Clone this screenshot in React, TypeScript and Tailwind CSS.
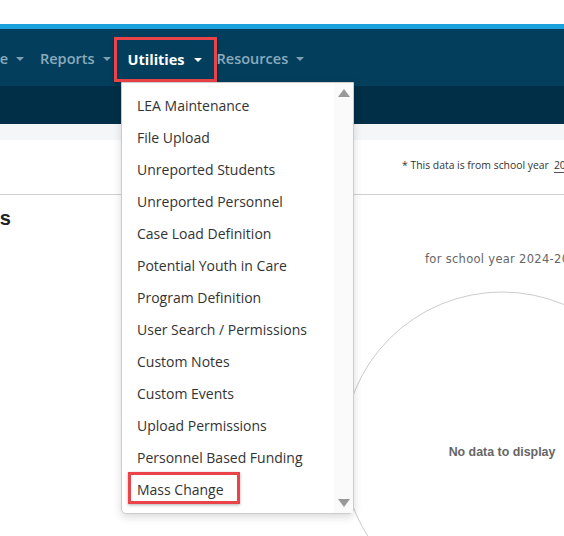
import React from "react";

const items = [
  "LEA Maintenance",
  "File Upload",
  "Unreported Students",
  "Unreported Personnel",
  "Case Load Definition",
  "Potential Youth in Care",
  "Program Definition",
  "User Search / Permissions",
  "Custom Notes",
  "Custom Events",
  "Upload Permissions",
  "Personnel Based Funding",
  "Mass Change",
];

function Caret({ white }: { white?: boolean }) {
  return (
    <span
      className={
        white
          ? "block w-0 h-0 border-x-[4px] border-x-transparent border-t-[4px] border-t-white"
          : "block w-0 h-0 border-x-[4px] border-x-transparent border-t-[4px] border-t-[#7f9fb1]"
      }
    />
  );
}

export default function App() {
  return (
    <div
      className="relative w-[564px] h-[536px] overflow-hidden bg-white"
      style={{ fontFamily: '"Open Sans", sans-serif' }}
    >
      <div className="h-[24px] bg-white" />
      <div className="h-[5px] bg-[#1ba1db]" />
      <nav className="h-[57px] pt-[2px] bg-[#033f5c] flex items-center text-[14.5px] font-semibold text-[#8aabbd] whitespace-nowrap">
        <div className="w-[8px] overflow-hidden flex justify-end">
          <span>Compliance</span>
        </div>
        <span className="ml-[8px] flex items-center"><Caret /></span>
        <span className="ml-[16px]">Reports</span>
        <span className="ml-[8px] flex items-center"><Caret /></span>
        <div className="ml-[3px] self-start mt-[6px] h-[45px] border-[3px] border-[#ea4349] flex items-center pl-[11px] pr-[12px] text-white font-bold shadow-[0_2px_4px_rgba(0,0,0,0.35)]">
          <span>Utilities</span>
          <span className="ml-[9px] flex items-center"><Caret white /></span>
        </div>
        <span className="ml-[0px]">Resources</span>
        <span className="ml-[8px] flex items-center"><Caret /></span>
      </nav>
      <div className="h-[38px] bg-[#002f47]" />
      <div className="h-[16px] bg-[#f5f6f8]" />
      <div className="h-[55px] flex items-center pl-[402px] pb-[3px] text-[10.4px] text-[#333] whitespace-nowrap border-b border-[#cfcfcf]">
        <span>* This data is from school year</span>
        <span className="ml-[5px] border-b border-[#555] leading-[14px]">2024-2025</span>
      </div>
      <div className="flex">
        <div className="w-[340px] shrink-0 pt-[11px]">
          <div
            className="w-[11px] overflow-hidden flex justify-end whitespace-nowrap text-[20px] font-bold leading-[24px] text-[#222]"
            style={{ fontFamily: '"Liberation Sans", sans-serif' }}
          >
            <span>Dashboards</span>
          </div>
        </div>
        <div className="w-[224px] shrink-0 pt-[56px]">
          <div
            className="pl-[85px] text-[11.5px] leading-[16px] text-[#666] whitespace-nowrap tracking-[0.3px]"
            style={{ fontFamily: '"DejaVu Sans", sans-serif' }}
          >
            for school year 2024-2025
          </div>
          <svg width="224" height="260" className="mt-[12px] block overflow-visible">
            <circle cx="162" cy="172" r="159" fill="none" stroke="#cccccc" strokeWidth="1" />
            <text
              x="162"
              y="177"
              textAnchor="middle"
              fontSize="12.4"
              fontWeight="bold"
              fill="#666"
              style={{ fontFamily: '"Liberation Sans", sans-serif' }}
            >
              No data to display
            </text>
          </svg>
        </div>
      </div>

      <div className="absolute left-[121px] top-[82px] w-[233px] h-[432px] bg-white border border-[#cccccc] rounded-b-[5px] shadow-[0_3px_8px_rgba(0,0,0,0.15)] flex">
        <ul className="flex-1 pt-[6px] text-[14px] text-[#333]">
          {items.map((t) => (
            <li key={t} className="h-[32px] flex items-center pl-[15px] whitespace-nowrap">
              {t === "Mass Change" ? (
                <span className="relative">
                  {t}
                  <span className="absolute left-[-9px] top-[-7px] w-[112px] h-[32px] border-[3px] border-[#ea4349] shadow-[0_1px_3px_rgba(0,0,0,0.3)]" />
                </span>
              ) : (
                t
              )}
            </li>
          ))}
        </ul>
        <div className="w-[19px] bg-[#fafafa] flex flex-col items-center justify-between pt-[6px] pb-[6px]">
          <span className="w-0 h-0 border-x-[6px] border-x-transparent border-b-[8px] border-b-[#999]" />
          <span className="w-0 h-0 border-x-[6px] border-x-transparent border-t-[8px] border-t-[#999]" />
        </div>
      </div>
    </div>
  );
}
